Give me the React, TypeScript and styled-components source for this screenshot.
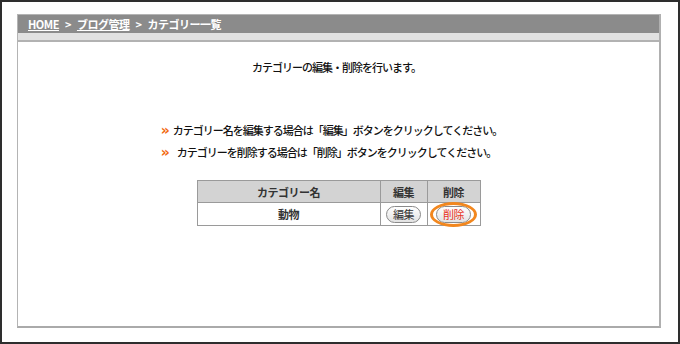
import React from 'react'
import styled, { createGlobalStyle } from 'styled-components'

const FONT = `"Noto Sans CJK JP", "Liberation Sans", sans-serif`

const GlobalStyle = createGlobalStyle`
  html, body {
    margin: 0;
    padding: 0;
    background: #fff;
  }
  body {
    font-family: ${FONT};
  }
`

const Frame = styled.div`
  box-sizing: border-box;
  width: 680px;
  height: 344px;
  border: 2px solid #2e2e2e;
  padding: 12px 17px 14px 15px;
  display: flex;
  background: #fff;
`

const Panel = styled.section`
  flex: 1;
  display: flex;
  flex-direction: column;
  border: 1px solid #b4b4b4;
  border-right: 2px solid #b0b0b0;
  border-bottom: 2px solid #aaa;
`

const Breadcrumb = styled.div`
  height: 18px;
  background: #8b8b8b;
  display: flex;
  align-items: center;
  gap: 6px;
  padding-left: 10px;
  color: #fff;
  font-size: 11px;
  font-weight: 700;
  letter-spacing: -0.5px;

  a {
    color: #fff;
    text-decoration: underline;
  }
`

const SubBand = styled.div`
  height: 7px;
  background: #e1e1e1;
  border-bottom: 2px solid #b2b2b2;
`

const Body = styled.div`
  display: flex;
  flex-direction: column;
  align-items: center;
  color: #111;
  font-size: 11px;
  font-weight: 500;
  letter-spacing: -1px;
`

const Lead = styled.p`
  margin: 17px 4px 0 0;
  line-height: 16px;
`

const Notes = styled.ul`
  list-style: none;
  margin: 44px 14px 0 0;
  padding: 0;

  li {
    height: 22px;
    line-height: 22px;
    white-space: nowrap;
  }
`

const Chevron = styled.span<{ $gap: number }>`
  display: inline-block;
  color: #f26a12;
  font-weight: 700;
  font-size: 14px;
  line-height: 22px;
  vertical-align: top;
  font-family: "DejaVu Sans", sans-serif;
  margin-right: ${(p) => p.$gap}px;
  letter-spacing: 0;
`

const Table = styled.table`
  margin-top: 17px;
  border-collapse: collapse;
  border: 1px solid #9a9a9a;

  th,
  td {
    border: 1px solid #9a9a9a;
    text-align: center;
    padding: 0;
    font-size: 11px;
    letter-spacing: -0.5px;
  }

  th {
    background: #d3d3d3;
    height: 21px;
    font-weight: 700;
    color: #333;
  }

  td {
    height: 22px;
    font-weight: 700;
    color: #333;
  }
`

const Pill = styled.span<{ $danger?: boolean }>`
  position: relative;
  display: inline-block;
  box-sizing: border-box;
  height: 17px;
  line-height: 15px;
  padding: 0 6px;
  border: 1px solid #8a8a8a;
  border-radius: 9px;
  background: linear-gradient(#ffffff, #e2e2e2);
  color: ${(p) => (p.$danger ? '#e8321c' : '#333')};
  font-weight: 400;
  font-size: 11px;
  vertical-align: middle;
`

const Circle = styled.span`
  position: absolute;
  left: -7px;
  right: -7px;
  top: -5px;
  bottom: -5px;
  border: 3px solid #f2871e;
  border-radius: 50%;
`

export default function App() {
  return (
    <>
      <GlobalStyle />
      <Frame>
        <Panel>
          <Breadcrumb>
            <a>HOME</a>
            <span>&gt;</span>
            <a>ブログ管理</a>
            <span>&gt;</span>
            <span>カテゴリー一覧</span>
          </Breadcrumb>
          <SubBand />
          <Body>
            <Lead>カテゴリーの編集・削除を行います。</Lead>
            <Notes>
              <li>
                <Chevron $gap={3}>»</Chevron>
                カテゴリー名を編集する場合は「編集」ボタンをクリックしてください。
              </li>
              <li>
                <Chevron $gap={7}>»</Chevron>
                カテゴリーを削除する場合は「削除」ボタンをクリックしてください。
              </li>
            </Notes>
            <Table>
              <colgroup>
                <col style={{ width: 183 }} />
                <col style={{ width: 47 }} />
                <col style={{ width: 53 }} />
              </colgroup>
              <thead>
                <tr>
                  <th>カテゴリー名</th>
                  <th>編集</th>
                  <th>削除</th>
                </tr>
              </thead>
              <tbody>
                <tr>
                  <td>動物</td>
                  <td>
                    <Pill>編集</Pill>
                  </td>
                  <td>
                    <Pill $danger>
                      削除
                      <Circle />
                    </Pill>
                  </td>
                </tr>
              </tbody>
            </Table>
          </Body>
        </Panel>
      </Frame>
    </>
  )
}
